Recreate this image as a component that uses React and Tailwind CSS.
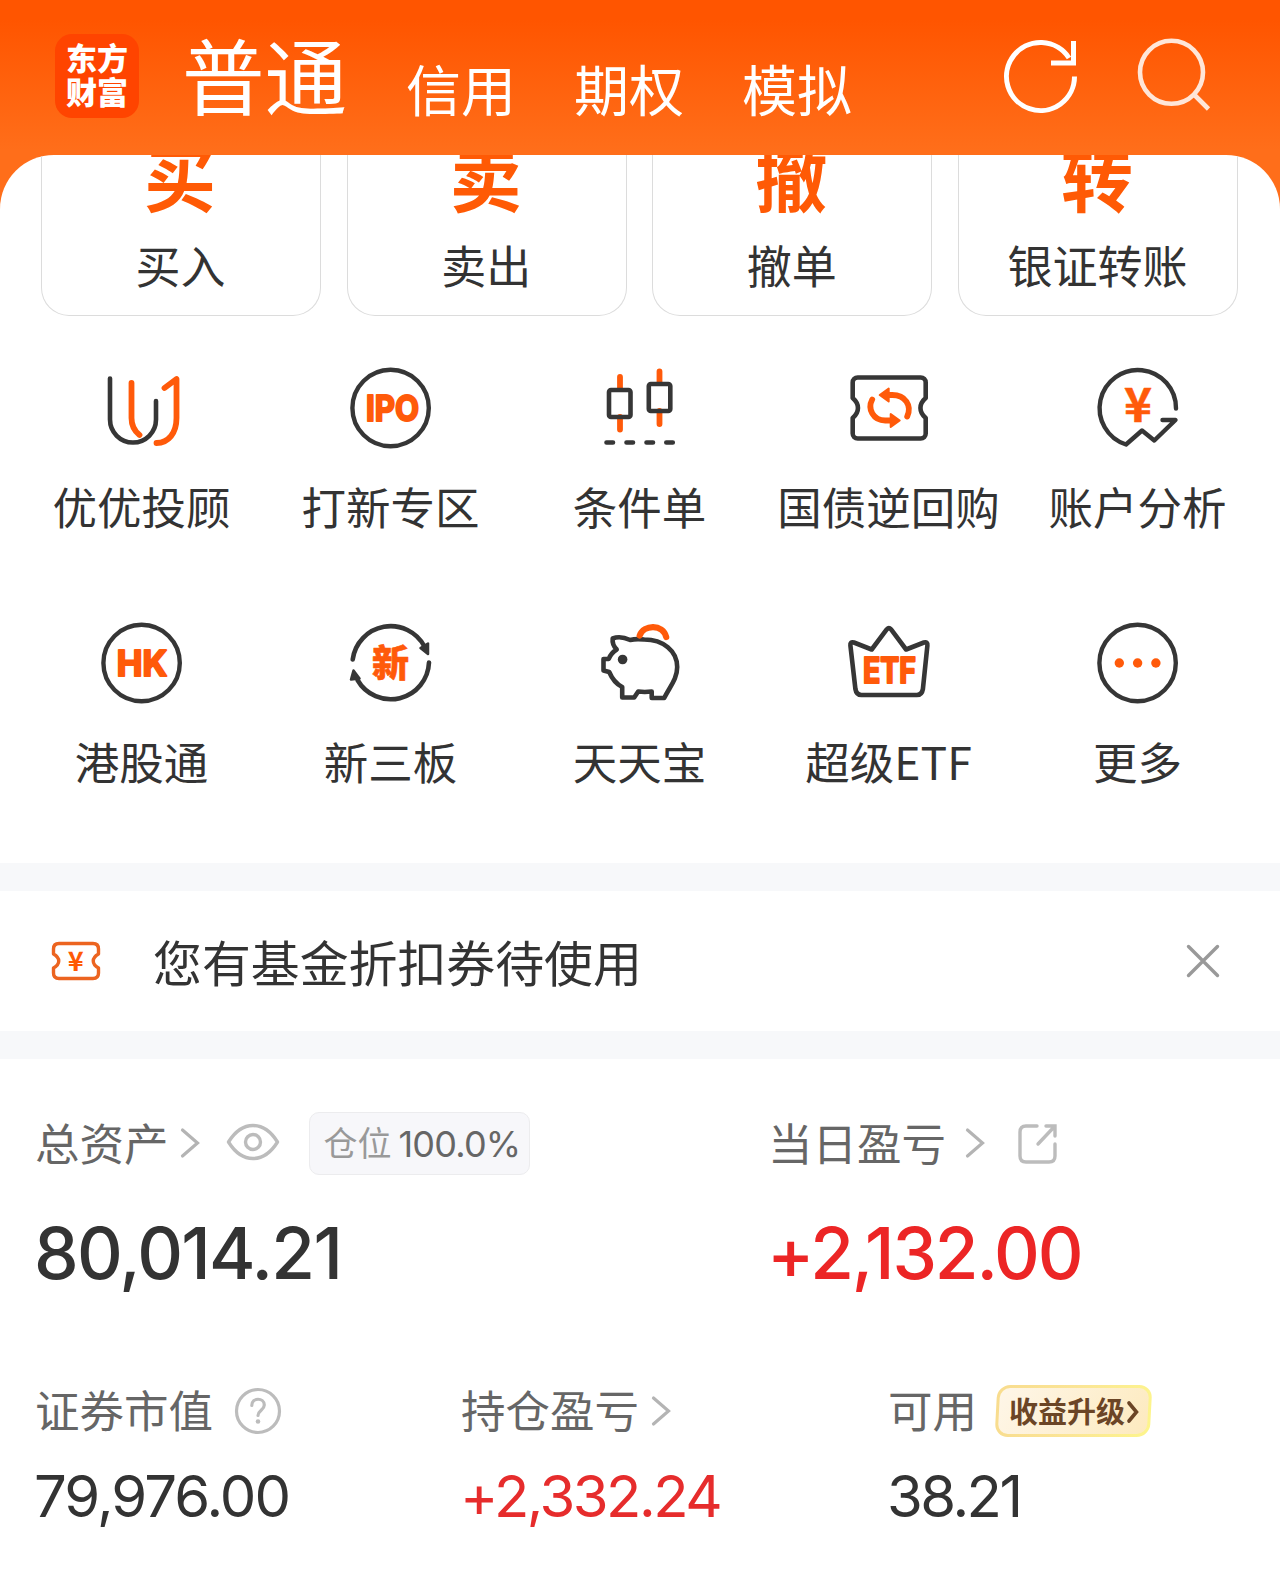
import React from "react";

const DARK = "#363636";
const ORANGE = "#ff5a0a";

const ring = <circle cx="47.600" cy="48" r="38.200" stroke={DARK} strokeWidth="4.400" />;

function IconText({ x, y, width, size, children }) {
  return (
    <text
      x={x}
      y={y}
      textLength={width}
      lengthAdjust="spacingAndGlyphs"
      fontSize={size}
      fill={ORANGE}
      stroke={ORANGE}
      strokeWidth="2.200"
      strokeLinejoin="round"
      className="font-['Inter','Noto_Sans_CJK_SC',sans-serif] font-bold"
    >
      {children}
    </text>
  );
}

const icons = {
  advisor: (
    <>
      <path d="M16 18.500V59.500a23 23 0 0 0 46 0V41" stroke={DARK} strokeWidth="4.600" />
      <path d="M37.500 23V58c0 7 3 13 8 17M70.500 28l12-9V58c0 15-8 25-20 25" stroke={ORANGE} strokeWidth="5.800" />
    </>
  ),
  ipo: (
    <>
      {ring}
      <IconText x="23" y="60.800" width="53" size="35.500">IPO</IconText>
    </>
  ),
  candles: (
    <>
      <path d="M28 17V29M28 57V69.500M67.500 11.500V23M67.500 51V64" stroke={ORANGE} strokeWidth="5.800" />
      <rect x="17" y="30" width="21.500" height="27" rx="2" stroke={DARK} strokeWidth="4.600" />
      <rect x="56.800" y="24" width="21.500" height="27" rx="2" stroke={DARK} strokeWidth="4.600" />
      <path d="M14.500 82.500h6.500M34.500 82.500h6.500M54.500 82.500h6.500M74.300 82.500h6.500" stroke={DARK} strokeWidth="4.600" />
    </>
  ),
  bond: (
    <g transform="translate(-0.8 0)">
      <path
        d="M17.500 17.500H80.500a5 5 0 0 1 5 5V38c-7 6-7 14 0 20v15.500a5 5 0 0 1-5 5H17.500a5 5 0 0 1-5-5V58c7-6 7-14 0-20V22.500a5 5 0 0 1 5-5Z"
        stroke={DARK}
        strokeWidth="4.600"
      />
      <path d="M48 35h4c13 0 20 10.500 15 21.500M32 39.500C27 49 33 60.500 45 60.500h5" stroke={ORANGE} strokeWidth="5.800" />
      <path d="M39.500 35l9-6.500v13ZM59.500 60.500l-9-6.500v13Z" fill={ORANGE} stroke={ORANGE} strokeWidth="2" />
    </g>
  ),
  account: (
    <>
      <path d="M86 48.500A38.200 38.200 0 1 0 36 84.500L52 70.500 64.300 80.500 85.500 60H72.500" stroke={DARK} strokeWidth="4.400" />
      <text
        x="34"
        y="61.500"
        textLength="28"
        lengthAdjust="spacingAndGlyphs"
        fontSize="47"
        fill={ORANGE}
        stroke={ORANGE}
        strokeWidth="0.500"
        className="font-['Noto_Sans_CJK_SC',sans-serif] font-bold"
      >
        ¥
      </text>
    </>
  ),
  hk: (
    <>
      {ring}
      <IconText x="22.800" y="61" width="50.500" size="35.500">HK</IconText>
    </>
  ),
  newBoard: (
    <>
      <path d="M9.700 44.500A38.300 38.300 0 0 1 81.500 31.500M86 47.500A38.300 38.300 0 0 1 14.500 65" stroke={DARK} strokeWidth="4.600" />
      <path d="M85 28.500V39L77.500 33ZM10.500 55.500l6 8-8.500 1Z" fill={DARK} stroke={DARK} strokeWidth="2.500" />
      <text
        x="47.500"
        y="62"
        textAnchor="middle"
        fontSize="37"
        fill={ORANGE}
        stroke={ORANGE}
        strokeWidth="0.600"
        className="font-['Noto_Sans_CJK_SC',sans-serif] font-black"
      >
        新
      </text>
    </>
  ),
  piggy: (
    <g transform="translate(-0.8 0)">
      <path
        d="M21.500 23.500c5-2 12-1 17.500 1.500 4-1 9-1 14-.5C72 24.500 86 36 86 52c0 12-7 19-13 31H60.500V76.500c-5 .6-9 .6-13.500 0l-4 6H31V72c-6-3-10-8-13-15L12.300 55.500V44H17.500c1.500-4 4-7 8-9.500-3-3-4.500-7-4-11Z"
        stroke={DARK}
        strokeWidth="4.600"
      />
      <circle cx="31.400" cy="44.500" r="4.800" fill={DARK} />
      <path d="M48.500 20.500c4-11 23-12 26.500 1.500" stroke={ORANGE} strokeWidth="6.200" />
    </g>
  ),
  etf: (
    <g transform="translate(-0.6 0)">
      <path
        d="M13.500 27.500 31.300 34.500 46.500 14.200q2-2.200 4 0L65.700 34.500 83.500 27.500q4-1 3.500 3L82.500 74q-1 6-6 6H21q-5 0-6-6L10 30.500q-.5-4 3.500-3Z"
        stroke={DARK}
        strokeWidth="4.600"
      />
      <IconText x="22.500" y="68" width="53" size="35">ETF</IconText>
    </g>
  ),
  more: (
    <>
      {ring}
      <circle cx="29.300" cy="48" r="4.700" fill={ORANGE} />
      <circle cx="47.600" cy="48" r="4.700" fill={ORANGE} />
      <circle cx="65.900" cy="48" r="4.700" fill={ORANGE} />
    </>
  ),
};

const shortcuts = [
  ["advisor", "优优投顾"],
  ["ipo", "打新专区"],
  ["candles", "条件单"],
  ["bond", "国债逆回购"],
  ["account", "账户分析"],
  ["hk", "港股通"],
  ["newBoard", "新三板"],
  ["piggy", "天天宝"],
  ["etf", "超级ETF"],
  ["more", "更多"],
];

const actions = [
  ["买", "买入"],
  ["卖", "卖出"],
  ["撤", "撤单"],
  ["转", "银证转账"],
];

function Chevron({ className }) {
  return (
    <svg viewBox="0 0 20 32" className={`mb-[1px] h-[32px] w-[20px] shrink-0 ${className}`} fill="none" stroke="#b4b4b4" strokeWidth="3.200" strokeLinecap="round">
      <path d="M2.500 3 17.500 16 2.500 29" />
    </svg>
  );
}

function Label({ children }) {
  return <span className="mb-[5px] text-[44.500px] leading-[45px]">{children}</span>;
}

function Header() {
  return (
    <header className="flex h-[155px] text-white">
      <div className="ml-[55px] mt-[34px] flex h-[84px] w-[84px] shrink-0 flex-col items-center justify-center rounded-[17px] bg-[#ff4400] pb-[5px] text-[31px] leading-[34px] font-black">
        <span>东方</span>
        <span>财富</span>
      </div>
      <nav className="ml-[43px] flex items-start whitespace-nowrap">
        <span className="mt-[32px] text-[82.500px] leading-[82px]">普通</span>
        <span className="ml-[59px] mt-[60px] text-[55px] leading-[55px]">信用</span>
        <span className="ml-[58px] mt-[60px] text-[55px] leading-[55px]">期权</span>
        <span className="ml-[58px] mt-[60px] text-[55px] leading-[55px]">模拟</span>
      </nav>
      <svg viewBox="0 0 80 80" className="ml-auto mt-[35px] h-[80px] w-[80px] shrink-0" fill="none" stroke="#fff" strokeWidth="5">
        <path d="M73.500 41.500A34 34 0 1 1 68 23" />
        <path d="M72.500 6V28H50" />
      </svg>
      <svg viewBox="0 0 80 80" className="ml-[53px] mr-[66px] mt-[36px] h-[80px] w-[80px] shrink-0" fill="none" stroke="#ffe6d8" strokeWidth="4.600">
        <circle cx="37.500" cy="36.300" r="31.500" />
        <path d="M59.500 58 74.500 73" />
      </svg>
    </header>
  );
}

export default function App() {
  return (
    <div className="h-[1578px] w-[1280px] overflow-hidden bg-white font-['Noto_Sans_CJK_SC',sans-serif] text-[#333]">
      <div className="bg-[linear-gradient(to_bottom,#ff5500_0px,#ff5500_20px,#ff6e1a_150px,#ff6e1a_220px)]">
        <Header />
        <main className="h-[708px] overflow-hidden rounded-t-[54px] bg-white">
          <section className="flex h-[161px] justify-between pl-[41px] pr-[42px]">
            {actions.map(([mark, label]) => (
              <div key={label} className="flex w-[280px] flex-col items-center overflow-hidden rounded-b-[28px] border border-t-0 border-[#dcdcdc]">
                <span className="-mt-[16px] mr-[2px] text-[72px] leading-[72px] font-bold text-[#ff5a05]">{mark}</span>
                <span className="mr-[1px] mt-[31px] text-[45px] leading-[45px]">{label}</span>
              </div>
            ))}
          </section>
          <section className="ml-[17px] mt-[44px] grid w-[1245px] grid-cols-5">
            {shortcuts.map(([icon, label]) => (
              <div key={label} className="flex h-[255px] flex-col items-center whitespace-nowrap">
                <svg viewBox="0 0 96 96" className="h-[96px] w-[96px]" fill="none" strokeLinecap="round" strokeLinejoin="round">
                  {icons[icon]}
                </svg>
                <span className="mt-[27px] text-[44.500px] leading-[45px]">{label}</span>
              </div>
            ))}
          </section>
        </main>
      </div>

      <section className="flex h-[196px] items-center border-y-[28px] border-[#f7f8fa] pl-[51px] pr-[59px]">
        <svg viewBox="0 0 50 40" className="h-[40px] w-[50px]" fill="none" stroke="#ec6420" strokeWidth="3.400" strokeLinejoin="round">
          <path d="M8 2.500H42q5.500 0 5.500 5.500V13c-7 4-7 10 0 14v5q0 5.500-5.500 5.500H8q-5.500 0-5.500-5.500V27c7-4 7-10 0-14V8q0-5.500 5.500-5.500Z" />
          <text x="24.800" y="29.500" textAnchor="middle" fontSize="27" fill="#ff5a05" stroke="none" className="font-['Noto_Sans_CJK_SC',sans-serif] font-bold">¥</text>
        </svg>
        <span className="ml-[52px] text-[48.900px] leading-[50px]">您有基金折扣券待使用</span>
        <svg viewBox="0 0 36 36" className="ml-auto h-[36px] w-[36px]" stroke="#999" strokeWidth="3.400" strokeLinecap="round">
          <path d="M3.500 3.500l29 29M32.500 3.500l-29 29" />
        </svg>
      </section>

      <section className="flex pt-[53px] text-[#666]">
        <div className="w-[733px] pl-[35px]">
          <div className="flex h-[63px] items-center">
            <Label>总资产</Label>
            <Chevron className="ml-[11px]" />
            <svg viewBox="0 0 54 38" className="mb-[3px] ml-[26px] h-[38px] w-[54px]" fill="none" stroke="#bcbcbc" strokeWidth="3.400">
              <path d="M2.500 19C10 7 18 2.500 27 2.500S44 7 51.500 19C44 31 36 35.500 27 35.500S10 31 2.500 19Z" strokeLinejoin="round" />
              <circle cx="27" cy="19" r="7.500" />
            </svg>
            <div className="ml-[29px] flex h-[63px] w-[221px] items-center rounded-[10px] border border-[#ececee] bg-[#f7f7fa] pl-[14px]">
              <span className="mb-[3px] text-[34px] leading-[34px] text-[#999]">仓位</span>
              <span className="ml-[7px] font-['Inter',sans-serif] text-[36px] leading-[36px] tracking-[-0.8px]">100.0%</span>
            </div>
          </div>
          <div className="-ml-[1px] mt-[43px] font-['Inter',sans-serif] text-[71px] leading-[71px] font-medium tracking-[-1.700px] text-[#333]">80,014.21</div>
        </div>
        <div className="pl-[35px]">
          <div className="flex h-[63px] items-center">
            <Label>当日盈亏</Label>
            <Chevron className="ml-[19px]" />
            <svg viewBox="0 0 42 42" className="ml-[32px] h-[42px] w-[42px]" fill="none" stroke="#bcbcbc" strokeWidth="3.400" strokeLinecap="round">
              <path d="M20 3H9Q3 3 3 9V33q0 6 6 6H32q6 0 6-6V21M29 3h9V13M38 3 21 21" />
            </svg>
          </div>
          <div className="-ml-[1px] mt-[43px] font-['Inter',sans-serif] text-[71px] leading-[71px] font-medium tracking-[-2.100px] text-[#ec2525]">+2,132.00</div>
        </div>
      </section>

      <section className="flex pt-[95px] text-[#666]">
        <div className="w-[426px] pl-[35px]">
          <div className="flex h-[54px] items-center">
            <Label>证券市值</Label>
            <svg viewBox="0 0 48 48" className="ml-[21px] h-[48px] w-[48px]" fill="none" stroke="#bcbcbc" strokeWidth="3.200" strokeLinecap="round">
              <circle cx="24" cy="24" r="21.500" />
              <path d="M17.800 18.500c0-8.500 12.500-8 12.500-.5 0 5-6.300 5.500-6.300 10.500" />
              <circle cx="24" cy="34.500" r="2.300" fill="#bcbcbc" stroke="none" />
            </svg>
          </div>
          <div className="-ml-[1px] mt-[29px] font-['Inter',sans-serif] text-[58px] leading-[58px] tracking-[-1.900px] text-[#333]">79,976.00</div>
        </div>
        <div className="w-[429px] pl-[35px]">
          <div className="flex h-[54px] items-center">
            <Label>持仓盈亏</Label>
            <Chevron className="ml-[12px]" />
          </div>
          <div className="-ml-[1px] mt-[29px] font-['Inter',sans-serif] text-[58px] leading-[58px] tracking-[-2.500px] text-[#e62c2c]">+2,332.24</div>
        </div>
        <div className="pl-[33px]">
          <div className="flex h-[54px] items-center">
            <Label>可用</Label>
            <div className="ml-[19px] h-[52px] w-[155px] -skew-x-3 rounded-[13px] bg-[linear-gradient(100deg,#f8dc8e,#fbe596_50%,#fdf58c)] p-[3px]">
              <div className="flex h-full items-center rounded-[10px] bg-[linear-gradient(120deg,#fef6e8,#fdeabf)] pl-[10px]">
                <div className="flex skew-x-3 items-center text-[#6b4526]">
                  <span className="mb-[2px] text-[29px] leading-[29px] font-bold">收益升级</span>
                  <svg viewBox="0 0 14 26" className="ml-[1px] h-[26px] w-[14px]" fill="none" stroke="#6b4526" strokeWidth="3.600" strokeLinecap="round">
                    <path d="M3 4 10.500 13 3 22" />
                  </svg>
                </div>
              </div>
            </div>
          </div>
          <div className="-ml-[1px] mt-[29px] font-['Inter',sans-serif] text-[58px] leading-[58px] tracking-[-2.500px] text-[#333]">38.21</div>
        </div>
      </section>
    </div>
  );
}
